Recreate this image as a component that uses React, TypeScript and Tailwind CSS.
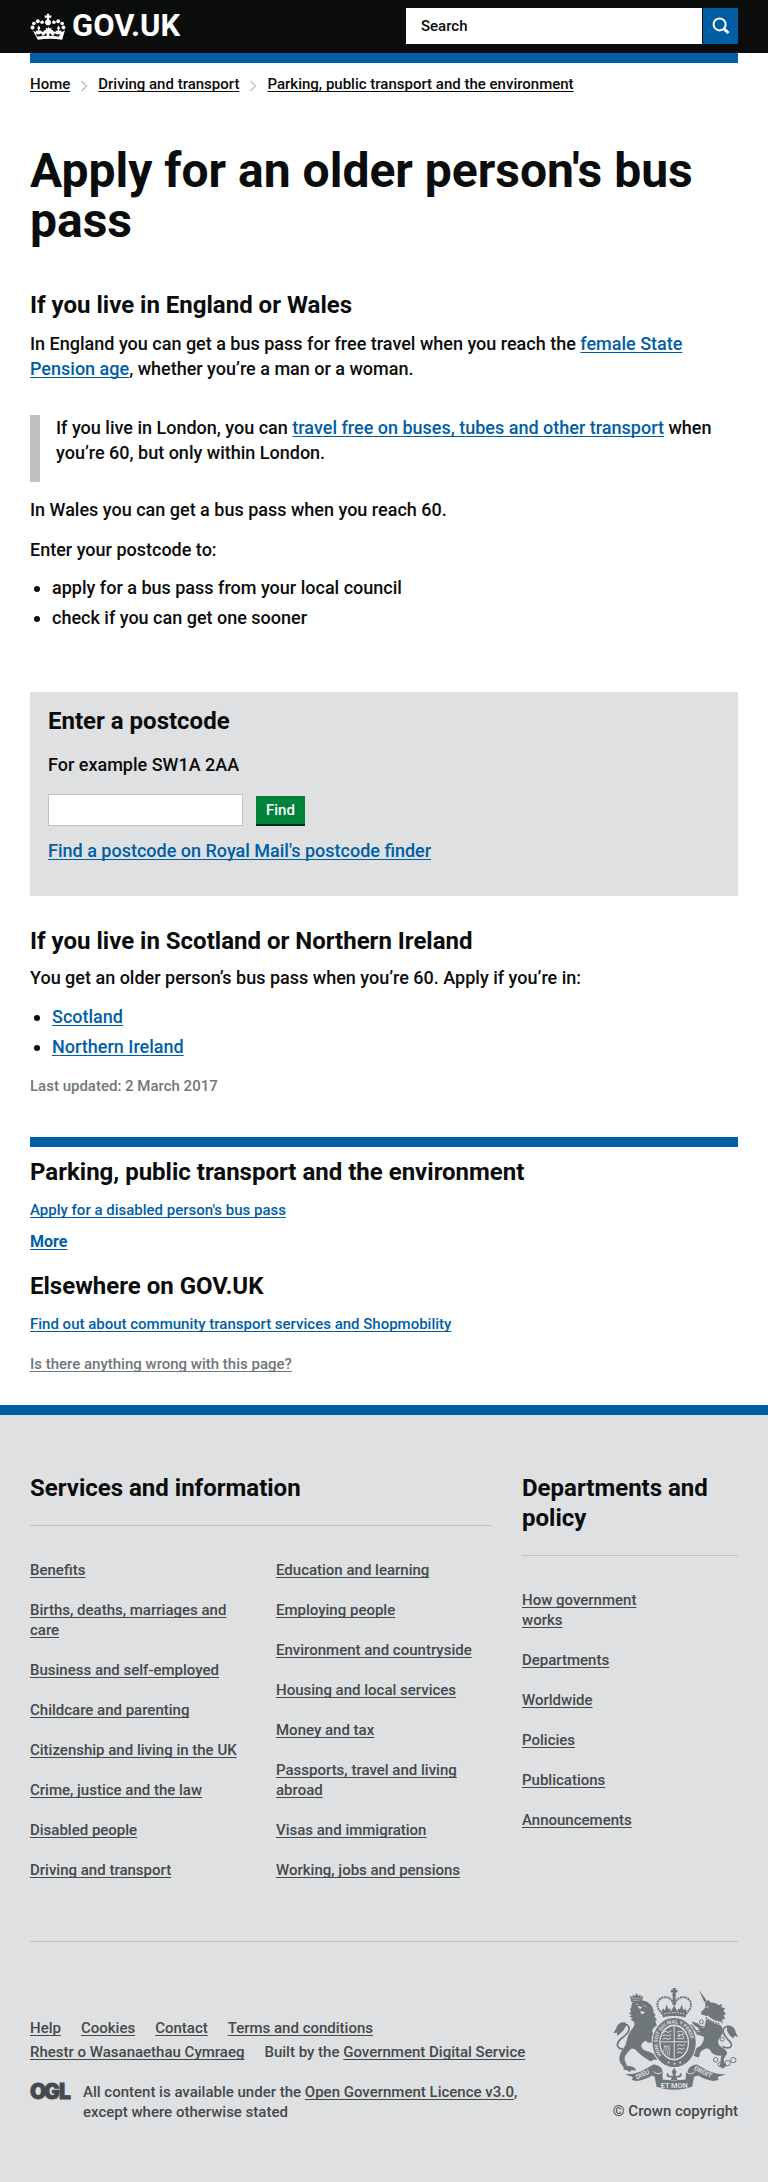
import React from "react";

const LINK = "underline decoration-1 underline-offset-2 [text-decoration-skip-ink:none]";
const BLUE = "text-[#005ea5] " + LINK;
const H2 = "text-2xl leading-[30px] font-bold";

const servicesLeft = [
  "Benefits",
  "Births, deaths, marriages and care",
  "Business and self-employed",
  "Childcare and parenting",
  "Citizenship and living in the UK",
  "Crime, justice and the law",
  "Disabled people",
  "Driving and transport",
];

const servicesRight = [
  "Education and learning",
  "Employing people",
  "Environment and countryside",
  "Housing and local services",
  "Money and tax",
  "Passports, travel and living abroad",
  "Visas and immigration",
  "Working, jobs and pensions",
];

const departments = [
  "How government works",
  "Departments",
  "Worldwide",
  "Policies",
  "Publications",
  "Announcements",
];

function CrownLogo() {
  return (
    <svg viewBox="90 34 108 82" className="h-[27px] w-9" fill="#fff" aria-hidden="true">
      <circle cx="97" cy="78" r="6" />
      <circle cx="101" cy="66" r="5.5" />
      <circle cx="113" cy="59" r="6" />
      <circle cx="126" cy="62" r="5.5" />
      <circle cx="191" cy="78" r="6" />
      <circle cx="187" cy="66" r="5.5" />
      <circle cx="175" cy="59" r="6" />
      <circle cx="162" cy="62" r="5.5" />
      <path d="M140 36h8l-1 6 7-1v8l-7-1 1 7c6 2 7 9 3 13l-3 3h-8l-3-3c-4-4-3-11 3-13l1-7-7 1v-8l7 1z" />
      <path d="M96 84c3 4 7 7 12 7l-1-4 7 1v-4l-3-4 5-8 5 8-3 4v4l7-1-1 4c5 1 9-2 10-6l4 1-1-7 7 2 2-7 2 7 7-2-1 7 4-1c1 4 5 7 10 6l-1-4 7 1v-4l-3-4 5-8 5 8-3 4v4l7-1-1 4c5 0 9-3 12-7l-9 31c-25-4-49-4-74 0z" />
      <path d="M108 97c5 4 11 3 15-2l4 8c4 0 7-3 9-7l5 1-2 6h10l-2-6 5-1c2 4 5 7 9 7l4-8c4 5 10 6 15 2l-2 8c-23-3-45-3-68 0z" fill="#0b0c0c" />
    </svg>
  );
}

function SearchIcon() {
  return (
    <svg viewBox="0 0 18 18" className="size-[18px]" fill="none" stroke="#fff" aria-hidden="true">
      <circle cx="7.6" cy="7.4" r="6" strokeWidth="2" />
      <path d="M12 11.8l4.5 4.2" strokeWidth="3" />
    </svg>
  );
}

function Chevron() {
  return (
    <svg viewBox="0 0 8 12" className="mx-2.5 mt-1 h-3 w-2" fill="none" stroke="#bfc1c3" strokeWidth="1.4" aria-hidden="true">
      <path d="M1.5 1l5 5-5 5" />
    </svg>
  );
}

function OglLogo() {
  return (
    <svg viewBox="0 0 41 18" className="h-[18px] w-[41px] shrink-0 overflow-visible" role="img" aria-label="Open Government Licence">
      <text x="0 14 29" y="16.5" fill="#454a4c" stroke="#454a4c" strokeWidth="0.8" className="font-['Inter'] text-[21px] font-black">OGL</text>
    </svg>
  );
}

function CoatOfArms() {
  const bg = "#dee0e2";
  const letters = "font-['Roboto'] font-bold";
  return (
    <svg viewBox="68 80 376 308" className="h-[103px] w-[125px]" fill="#6f777b" aria-hidden="true">
      {/* imperial crown */}
      <path d="M247 82h10l-1 6 6-1v9l-6-1 2 12h-12l2-12-6 1v-9l6 1z" />
      <g fill="none" stroke="#6f777b" strokeWidth="6" strokeDasharray="6 2">
        <path d="M217 160c-16-14-22-34-6-46 14-9 33-3 37 12" />
        <path d="M287 160c16-14 22-34 6-46-14-9-33-3-37 12" />
      </g>
      <path d="M248 104h8l1 30h-10z" />
      <path d="M214 152l5-9 5 7 5-18 6 14 5-3 2 10 10-18 10 18 2-10 5 3 6-14 5 18 5-7 5 9-4 19c-22-6-46-6-68 0z" />
      <path d="M222 160c20-5 40-5 60 0" stroke={bg} strokeWidth="2.5" fill="none" strokeDasharray="5 3" />
      {/* lion */}
      <g>
        <path d="M119 105l7 5 3-9 5 6 5-10 5 10 6-6 2 9 7-5-4 19h-32z" />
        <path d="M124 113h30M127 119h25" stroke={bg} strokeWidth="1.5" />
        <path d="M125 127c9-8 32-10 46-3 13 7 20 19 19 33l6 5-3 6 7 10-5 4 5 13c-8 4-13 10-14 18 5 7 3 12-2 18l4 14-11-12c-10 7-22 12-24 22 0 11 10 16 22 18l19 9c6 4 9 12 5 17l-8-2-9 6-10-6c-11-7-23-15-32-25-7-8-15-11-20-5-7 9-15 14-17 25-1 10 5 15 6 24l16 2c7 2 12 7 12 13l-12-2-8 6-8-6-9-1c2-7-4-13-10-20-4-9-4-21 1-31 6-10 13-17 16-28 5-18 6-27 17-42 7-9 13-18 5-25l-9-5 7-3-10-7 7-2-8-8 7-3-4-9 4-4z" />
        <path d="M143 138l12 2-5 5zM151 152l13 4-10 4zM160 135l9 3M136 130l8 2" fill={bg} stroke={bg} strokeWidth="2" />
        <path d="M170 238c10 10 23 1 29-8M166 235l32 4" stroke="#6f777b" strokeWidth="9" fill="none" />
        <path d="M98 266c-22-2-21-19-5-32 15-12 28-23 22-36-4-8-16-8-18 2" fill="none" stroke="#6f777b" strokeWidth="5" />
        <path d="M106 186c-16-5-26 7-28 17l-9 15 11-2 0 10c11-8 19-13 24-24 4-6 3-10 2-16z" />
      </g>
      {/* unicorn */}
      <path d="M326 87l24 33-7 5z" />
      <path d="M345 125l10-7 6 8c10-1 18 2 25 8l10-4-2 10 11 3-5 8 8 8-7 6 4 10-9 2 2 12c-15 5-34-4-45-16-4-8-10-9-19-11l-1-8 13-13z" />
      <circle cx="352" cy="139" r="2.5" fill={bg} />
      <path d="M348 177c14 0 31 8 44 18 10 11 7 24 0 33-9 10-10 20-3 28 7 7 21 9 22 23l-9 15c-3 9 3 16 7 23l-12 8-9-8c6-8 1-22 7-32-12 3-24-2-31-10-5-9-9-13-18-10-10 4-19 10-17 22l-6 4-13-6-9 1 7-9c5-11 14-16 24-22 7-9 10-16 9-26-12-3-20-10-27-18l-5 5c-8-4-14-11-13-20l-3-9 15 7 12 18 13 3-10-15c-8-1-13-8-19-18 8 3 15 4 20 8l18 14z" />
      <path d="M349 167c12 12 27 20 46 22" stroke={bg} strokeWidth="9" fill="none" />
      <path d="M347 171c12 10 26 17 43 19" stroke="#6f777b" strokeWidth="5" strokeDasharray="5 3" fill="none" />
      <g fill="none" stroke="#6f777b" strokeWidth="3">
        <circle cx="334" cy="184" r="6" />
        <circle cx="325" cy="216" r="7" />
        <circle cx="396" cy="236" r="6" />
        <circle cx="377" cy="298" r="7" />
        <circle cx="390" cy="312" r="6" />
        <circle cx="413" cy="308" r="8" />
        <circle cx="430" cy="299" r="8" />
        <circle cx="338" cy="202" r="5" />
      </g>
      <path d="M397 258c22 10 34 0 23-14-11-12-24-24-20-37 3-9 12-11 17-7" fill="none" stroke="#6f777b" strokeWidth="5" />
      <path d="M411 195c14-3 26 9 26 20l7 15-11-4-3 8c-9-7-15-14-19-23z" />
      {/* garter and shield */}
      <ellipse cx="252" cy="246" rx="68" ry="78" fill={bg} />
      <ellipse cx="252" cy="246" rx="55" ry="64" fill="none" stroke="#6f777b" strokeWidth="20" />
      <ellipse cx="252" cy="246" rx="41" ry="49" />
      <path d="M252 198v96M212 244h80" stroke={bg} strokeWidth="3" />
      <g fill="none" stroke={bg} strokeWidth="3">
        <path d="M219 216l8-4 7 4 10-5M217 226l9-3 8 4 9-5M217 236l9-3 8 4 9-5" />
        <path d="M261 215c7-6 21-1 24 7M260 234l20 1M265 218l4 12M261 227l16-6 4 12" />
        <path d="M261 256l8-4 7 4 9-4M261 267l8-4 7 4 7-4M261 278l8-4 5 4 4-3" />
        <path d="M224 254l-4 21M229 255l-3 26M234 257l-2 28M239 260l-2 29M220 254c7 7 13 4 21-1" strokeWidth="2" />
      </g>
      <path id="garter" d="M214 284A50 58 0 1 1 290 284" fill="none" />
      <text fill={bg} className={letters + " text-[15px]"}>
        <textPath href="#garter">HONI SOIT QUI MAL Y PENSE</textPath>
      </text>
      <circle cx="235" cy="306" r="3" fill={bg} />
      <circle cx="253" cy="310" r="3" fill={bg} />
      <circle cx="270" cy="306" r="3" fill={bg} />
      {/* motto ribbon */}
      <path d="M106 341c38 2 59-16 84-29 18 2 27 11 28 24-7 13-22 15-33 9-12 8-29 15-45 17l-16-3 4-8c-7-5-17-5-22-10z" />
      <path d="M406 341c-38 2-61-15-86-29-18 2-27 11-28 24 7 13 22 15 33 9 12 8 29 15 45 17l16-3-4-8c7-5 19-5 24-10z" />
      <path d="M190 333c7 11 18 9 27 1l1 24h68l1-24c10 8 22 9 28 0l-9 45c-35 12-73 12-107 0z" />
      <path d="M190 333c8 9 19 9 26 1M288 334c8 8 20 8 27-1" fill="none" stroke={bg} strokeWidth="3" />
      <path d="M218 322h68v32c-22 8-46 8-68 0z" fill={bg} />
      <path d="M252 322l7 12-4 12h12l5-10c8 11-4 18-13 14l3 9h-20l3-9c-9 4-21-3-13-14l5 10h12l-4-12z" />
      <text transform="translate(140 357) rotate(-24)" fill={bg} className={letters + " text-[20px]"}>DIEU</text>
      <text transform="translate(310 328) rotate(26)" fill={bg} className={letters + " text-[20px]"}>DROIT</text>
      <text x="252" y="382" textAnchor="middle" fill={bg} className={letters + " text-[22px]"}>ET MON</text>
    </svg>
  );
}

function FooterLinks({ items, className = "" }: { items: string[]; className?: string }) {
  return (
    <ul className={"flex flex-col gap-5 " + className}>
      {items.map((item) => (
        <li key={item}>
          <a href="#" className={LINK}>{item}</a>
        </li>
      ))}
    </ul>
  );
}

function Header() {
  const [query, setQuery] = React.useState("");
  return (
    <header className="bg-[#0b0c0c]">
      <div className="flex items-start justify-between px-[30px] pt-2 pb-[9px]">
        <a href="#" className="flex items-center gap-1.5 pt-1 text-[31px] leading-7 font-bold text-white">
          <CrownLogo />
          GOV.UK
        </a>
        <form className="flex w-[332px] gap-px" onSubmit={(e) => e.preventDefault()}>
          <div className="relative flex-1">
            <input
              id="site-search"
              type="text"
              value={query}
              onChange={(e) => setQuery(e.target.value)}
              className="h-9 w-full bg-white px-[15px] text-[15px] font-medium text-[#0b0c0c]"
            />
            {query === "" && (
              <label htmlFor="site-search" className="pointer-events-none absolute top-0 left-[15px] text-[15px] leading-9 font-medium">
                Search
              </label>
            )}
          </div>
          <button type="submit" aria-label="Search" className="flex h-9 w-[35px] items-center justify-center bg-[#005ea5]">
            <SearchIcon />
          </button>
        </form>
      </div>
    </header>
  );
}

export default function App() {
  return (
    <div className="min-h-screen bg-white font-['Roboto',sans-serif] text-lg leading-[25px] font-medium text-[#0b0c0c]">
      <Header />
      <div className="mx-[30px] h-2.5 bg-[#005ea5]" />
      <nav aria-label="Breadcrumb" className="flex items-center px-[30px] pt-[11px] text-[15px] leading-5">
        <a href="#" className={LINK}>Home</a>
        <Chevron />
        <a href="#" className={LINK}>Driving and transport</a>
        <Chevron />
        <a href="#" className={LINK}>Parking, public transport and the environment</a>
      </nav>

      <main className="px-[30px]">
        <h1 className="pt-[52px] text-5xl leading-[50px] font-bold">Apply for an older person's bus pass</h1>

        <h2 className={"mt-11 " + H2}>If you live in England or Wales</h2>
        <p className="mt-[11px]">
          In England you can get a bus pass for free travel when you reach the{" "}
          <a href="#" className={BLUE}>female State Pension age</a>, whether you’re a man or a woman.
        </p>
        <div className="mt-[34px] border-l-10 border-[#bfc1c3] pb-[17px] pl-4">
          <p>
            If you live in London, you can{" "}
            <a href="#" className={BLUE}>travel free on buses, tubes and other transport</a> when you’re 60, but only within London.
          </p>
        </div>
        <p className="mt-[15px]">In Wales you can get a bus pass when you reach 60.</p>
        <p className="mt-[15px]">Enter your postcode to:</p>
        <ul className="mt-[13px] flex list-disc flex-col gap-[5px] pl-[22px]">
          <li>apply for a bus pass from your local council</li>
          <li>check if you can get one sooner</li>
        </ul>

        <form className="mt-[62px] bg-[#dee0e2] px-[18px] pt-[14px] pb-[33px]" onSubmit={(e) => e.preventDefault()}>
          <h2 className={H2}><label htmlFor="postcode">Enter a postcode</label></h2>
          <p className="mt-4">For example SW1A 2AA</p>
          <div className="mt-[17px] flex items-end gap-[13px]">
            <input id="postcode" type="text" className="h-8 w-[195px] border border-[#bfc1c3] bg-white px-2" />
            <button type="submit" className="h-[30px] border-b-2 border-[#003618] bg-[#00823b] px-2.5 text-[15px] leading-7 font-medium text-white">
              Find
            </button>
          </div>
          <p className="mt-3">
            <a href="#" className={BLUE}>Find a postcode on Royal Mail's postcode finder</a>
          </p>
        </form>

        <h2 className={"mt-[30px] " + H2}>If you live in Scotland or Northern Ireland</h2>
        <p className="mt-[9px]">You get an older person’s bus pass when you’re 60. Apply if you’re in:</p>
        <ul className="mt-[14px] flex list-disc flex-col gap-[5px] pl-[22px]">
          <li><a href="#" className={BLUE}>Scotland</a></li>
          <li><a href="#" className={BLUE}>Northern Ireland</a></li>
        </ul>
        <p className="mt-[17px] text-[15px] leading-5 text-[#6f777b]">Last updated: 2 March 2017</p>

        <aside className="mt-[41px] border-t-10 border-[#005ea5] pt-2.5 text-[15px] leading-5">
          <h2 className={H2}>Parking, public transport and the environment</h2>
          <p className="mt-[13px]"><a href="#" className={BLUE}>Apply for a disabled person's bus pass</a></p>
          <p className="mt-3 text-base leading-5 font-bold"><a href="#" className={BLUE}>More</a></p>
          <h2 className={"mt-[19px] " + H2}>Elsewhere on GOV.UK</h2>
          <p className="mt-[13px]"><a href="#" className={BLUE}>Find out about community transport services and Shopmobility</a></p>
          <p className="mt-5 text-[#6f777b]"><a href="#" className={LINK}>Is there anything wrong with this page?</a></p>
        </aside>
      </main>

      <footer className="mt-[31px] border-t-10 border-[#005ea5] bg-[#dee0e2] px-[30px] pb-[60px] text-[15px] leading-5 text-[#454a4c]">
        <div className="grid grid-cols-[462fr_216fr] gap-[30px] border-b border-[#bfc1c3] pt-[58px] pb-[61px]">
          <section>
            <h2 className={"border-b border-[#bfc1c3] pb-[22px] text-[#0b0c0c] " + H2}>Services and information</h2>
            <div className="mt-[34px] grid grid-cols-2 gap-[30px]">
              <FooterLinks items={servicesLeft} />
              <FooterLinks items={servicesRight} />
            </div>
          </section>
          <section>
            <h2 className={"border-b border-[#bfc1c3] pb-[22px] text-[#0b0c0c] " + H2}>Departments and policy</h2>
            <FooterLinks items={departments} className="mt-[34px] max-w-[140px]" />
          </section>
        </div>
        <div className="flex justify-between pt-[45px]">
          <div className="pt-[29px]">
            <ul className="flex max-w-[530px] flex-wrap gap-x-5 leading-6">
              <li><a href="#" className={LINK}>Help</a></li>
              <li><a href="#" className={LINK}>Cookies</a></li>
              <li><a href="#" className={LINK}>Contact</a></li>
              <li><a href="#" className={LINK}>Terms and conditions</a></li>
              <li><a href="#" className={LINK}>Rhestr o Wasanaethau Cymraeg</a></li>
              <li>Built by the <a href="#" className={LINK}>Government Digital Service</a></li>
            </ul>
            <div className="mt-[18px] flex gap-3">
              <OglLogo />
              <p className="max-w-[460px]">
                All content is available under the <a href="#" className={LINK}>Open Government Licence v3.0</a>, except where otherwise stated
              </p>
            </div>
          </div>
          <a href="#" className="flex shrink-0 flex-col items-end gap-[11px]">
            <CoatOfArms />
            © Crown copyright
          </a>
        </div>
      </footer>
    </div>
  );
}
